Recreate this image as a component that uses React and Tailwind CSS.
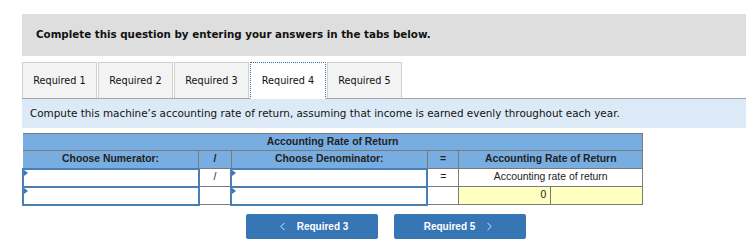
import { ChevronLeft, ChevronRight } from "lucide-react";

const tabs = ["Required 1", "Required 2", "Required 3", "Required 4", "Required 5"];

const Marker = () => (
  <span className="absolute left-0 top-0 h-0 w-0 border-y-[3px] border-l-[4px] border-y-transparent border-l-[#3a78b8]" />
);

const App = () => {
  const verdana = { fontFamily: "Verdana, 'DejaVu Sans', sans-serif" };
  const arial = "font-['Liberation_Sans',Arial,sans-serif]";
  const inputCell = "relative h-[18px] border-2 border-[#4a7fb5] bg-white";

  return (
    <div className="h-[248px] w-[746px] overflow-hidden bg-white pl-[22px] pt-[14px]" style={verdana}>
      <div className="flex h-[42px] items-center bg-[#dedede] pl-[14px] text-[10.3px] font-bold text-[#111]">
        Complete this question by entering your answers in the tabs below.
      </div>

      <div className="mt-[6px] flex h-[37px] gap-[1px] border-b border-[#a8a8a8]">
        {tabs.map((t, i) =>
          i === 3 ? (
            <div key={t} className="-mb-px flex w-[76px] items-center justify-center border border-dotted border-[#3b6ea5] border-b-white bg-white pt-[2px] text-[9.7px] text-[#111]">
              {t}
            </div>
          ) : (
            <div key={t} className="flex w-[75px] items-center justify-center border border-b-0 border-[#cfcfcf] bg-[#f3f3f3] pt-[2px] text-[9.7px] text-[#111]">
              {t}
            </div>
          )
        )}
      </div>

      <div className="flex h-[29px] items-center bg-[#dbeaf6] pl-[8px] text-[10.4px] text-[#111]">
        Compute this machine’s accounting rate of return, assuming that income is earned evenly throughout each year.
      </div>

      <table className={`mt-[5px] w-[621px] border-collapse text-[10.4px] text-[#222] ${arial}`}>
        <colgroup>
          <col className="w-[176px]" />
          <col className="w-[33px]" />
          <col className="w-[196px]" />
          <col className="w-[32px]" />
          <col className="w-[92px]" />
          <col className="w-[92px]" />
        </colgroup>
        <tbody>
          <tr className="h-[17px] bg-[#77ade0] font-bold">
            <td colSpan={6} className="border border-[#7a7a7a] border-l-0 text-center leading-none">
              Accounting Rate of Return
            </td>
          </tr>
          <tr className="h-[18px] bg-[#77ade0] font-bold">
            <td className="border border-[#7a7a7a] border-l-0 text-center leading-none">Choose Numerator:</td>
            <td className="border border-[#7a7a7a] text-center leading-none">/</td>
            <td className="border border-[#7a7a7a] text-center leading-none">Choose Denominator:</td>
            <td className="border border-[#7a7a7a] text-center leading-none">=</td>
            <td colSpan={2} className="border border-[#7a7a7a] text-center leading-none">
              Accounting Rate of Return
            </td>
          </tr>
          <tr className="h-[18px]">
            <td className={inputCell}><Marker /></td>
            <td className="border border-[#7a7a7a] text-center leading-none">/</td>
            <td className={inputCell}><Marker /></td>
            <td className="border border-[#7a7a7a] text-center leading-none">=</td>
            <td colSpan={2} className="border border-[#7a7a7a] text-center leading-none">
              Accounting rate of return
            </td>
          </tr>
          <tr className="h-[18px]">
            <td className={inputCell}><Marker /></td>
            <td className="border border-[#7a7a7a]" />
            <td className={inputCell}><Marker /></td>
            <td className="border border-[#7a7a7a]" />
            <td className="border border-[#7a7a7a] bg-[#ffffbf] pr-[4px] text-right leading-none">0</td>
            <td className="border border-[#7a7a7a] bg-[#ffffbf]" />
          </tr>
        </tbody>
      </table>

      <div className={`mt-[8px] flex gap-[16px] pl-[224px] ${arial}`}>
        <button type="button" className="flex h-[25px] w-[132px] items-center justify-center gap-[8px] rounded-[2px] bg-[#3776b5] text-[10px] font-bold text-white">
          <ChevronLeft size={13} strokeWidth={1.5} />
          <span>Required 3</span>
        </button>
        <button type="button" className="flex h-[25px] w-[132px] items-center justify-center gap-[8px] rounded-[2px] bg-[#3776b5] text-[10px] font-bold text-white">
          <span>Required 5</span>
          <ChevronRight size={13} strokeWidth={1.5} />
        </button>
      </div>
    </div>
  );
};

export default App;
